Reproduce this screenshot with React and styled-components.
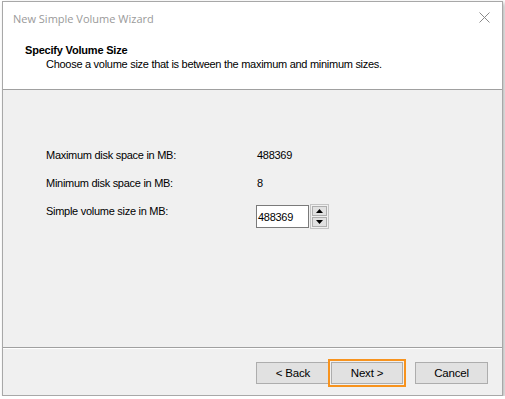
import React from 'react';
import styled, { createGlobalStyle } from 'styled-components';

const GlobalStyle = createGlobalStyle`
  body {
    margin: 0;
    background: #ffffff;
    font-family: "Liberation Sans", Arial, sans-serif;
  }
`;

const Window = styled.div`
  margin: 1px 0 0 2px;
  width: 499px;
  height: 393px;
  border: 1px solid #a8a8a8;
  background: #f0f0f0;
  box-shadow: 2px 2px 4px rgba(0, 0, 0, 0.28);
  display: flex;
  flex-direction: column;
`;

const TitleBar = styled.div`
  height: 32px;
  background: #ffffff;
  display: flex;
  align-items: center;
  justify-content: space-between;
  padding: 0 12px 0 10px;
`;

const Title = styled.span`
  font-family: "Open Sans", "Noto Sans", sans-serif;
  font-size: 11px;
  color: #9a9a9a;
`;

const CloseIcon = styled.svg`
  width: 11px;
  height: 11px;
  margin-top: -1px;
`;

const Header = styled.div`
  height: 56px;
  background: #ffffff;
  border-bottom: 1px solid #a0a0a0;
  padding: 9px 0 0 22px;
  box-sizing: border-box;
`;

const HeaderTitle = styled.div`
  font-size: 11px;
  font-weight: bold;
  color: #000;
  line-height: 14px;
  letter-spacing: -0.2px;
`;

const HeaderSub = styled.div`
  font-size: 11px;
  color: #000;
  line-height: 15px;
  padding-left: 21px;
  letter-spacing: -0.28px;
`;

const Body = styled.div`
  flex: 1;
  border-bottom: 1px solid #a0a0a0;
  padding: 51px 0 0 43px;
`;

const Grid = styled.div`
  display: grid;
  grid-template-columns: 210px auto;
  grid-auto-rows: 28px;
  align-items: center;
  font-size: 11px;
  letter-spacing: -0.28px;
  color: #000;
`;

const Value = styled.span`
  padding-left: 1px;
`;

const SpinRow = styled.div`
  display: flex;
  align-items: center;
  gap: 1px;
  margin-top: 11px;
`;

const NumberBox = styled.div`
  width: 50px;
  height: 21px;
  border: 1px solid #7a7a7a;
  background: #fff;
  display: flex;
  align-items: center;
  padding-left: 1px;
  font-size: 11px;
`;

const Spinner = styled.div`
  display: flex;
  flex-direction: column;
  gap: 1px;
  padding: 1px;
  height: 21px;
  border: 1px solid #c4c4c4;
  background: #f0f0f0;
`;

const SpinBtn = styled.div`
  width: 13px;
  flex: 1;
  border: 1px solid #adadad;
  background: #e1e1e1;
  display: flex;
  align-items: center;
  justify-content: center;
`;

const Footer = styled.div`
  border-top: 1px solid #ffffff;
  height: 47px;
  box-sizing: border-box;
  display: flex;
  align-items: center;
  padding: 2px 11px 0 253px;
`;

const Button = styled.button`
  width: ${p => p.$w || 74}px;
  height: 22px;
  border: 1px solid #adadad;
  background: #e1e1e1;
  font-family: "Liberation Sans", Arial, sans-serif;
  font-size: 11.5px;
  letter-spacing: -0.2px;
  color: #000;
  padding: 0;
  margin: 0;
`;

const Focus = styled.div`
  border: 2px solid #f7931e;
  padding: 1px;
  margin-left: -2px;
  margin-right: 9px;
`;

const upArrow = (
  <svg width="7" height="4" viewBox="0 0 7 4"><path d="M3.5 0 L7 4 L0 4 Z" fill="#000" /></svg>
);
const downArrow = (
  <svg width="7" height="4" viewBox="0 0 7 4"><path d="M0 0 L7 0 L3.5 4 Z" fill="#000" /></svg>
);

const App = () => {
  return (
    <>
      <GlobalStyle />
      <Window>
        <TitleBar>
          <Title>New Simple Volume Wizard</Title>
          <CloseIcon viewBox="0 0 11 11">
            <path d="M0.5 0.5 L10.5 10.5 M10.5 0.5 L0.5 10.5" stroke="#8a8a8a" strokeWidth="1" />
          </CloseIcon>
        </TitleBar>
        <Header>
          <HeaderTitle>Specify Volume Size</HeaderTitle>
          <HeaderSub>Choose a volume size that is between the maximum and minimum sizes.</HeaderSub>
        </Header>
        <Body>
          <Grid>
            <span>Maximum disk space in MB:</span>
            <Value>488369</Value>
            <span>Minimum disk space in MB:</span>
            <Value>8</Value>
            <span>Simple volume size in MB:</span>
            <SpinRow>
              <NumberBox>488369</NumberBox>
              <Spinner>
                <SpinBtn>{upArrow}</SpinBtn>
                <SpinBtn>{downArrow}</SpinBtn>
              </Spinner>
            </SpinRow>
          </Grid>
        </Body>
        <Footer>
          <Button $w={74}>&lt; Back</Button>
          <Focus>
            <Button $w={72}>Next &gt;</Button>
          </Focus>
          <Button $w={73}>Cancel</Button>
        </Footer>
      </Window>
    </>
  );
};

export default App;
